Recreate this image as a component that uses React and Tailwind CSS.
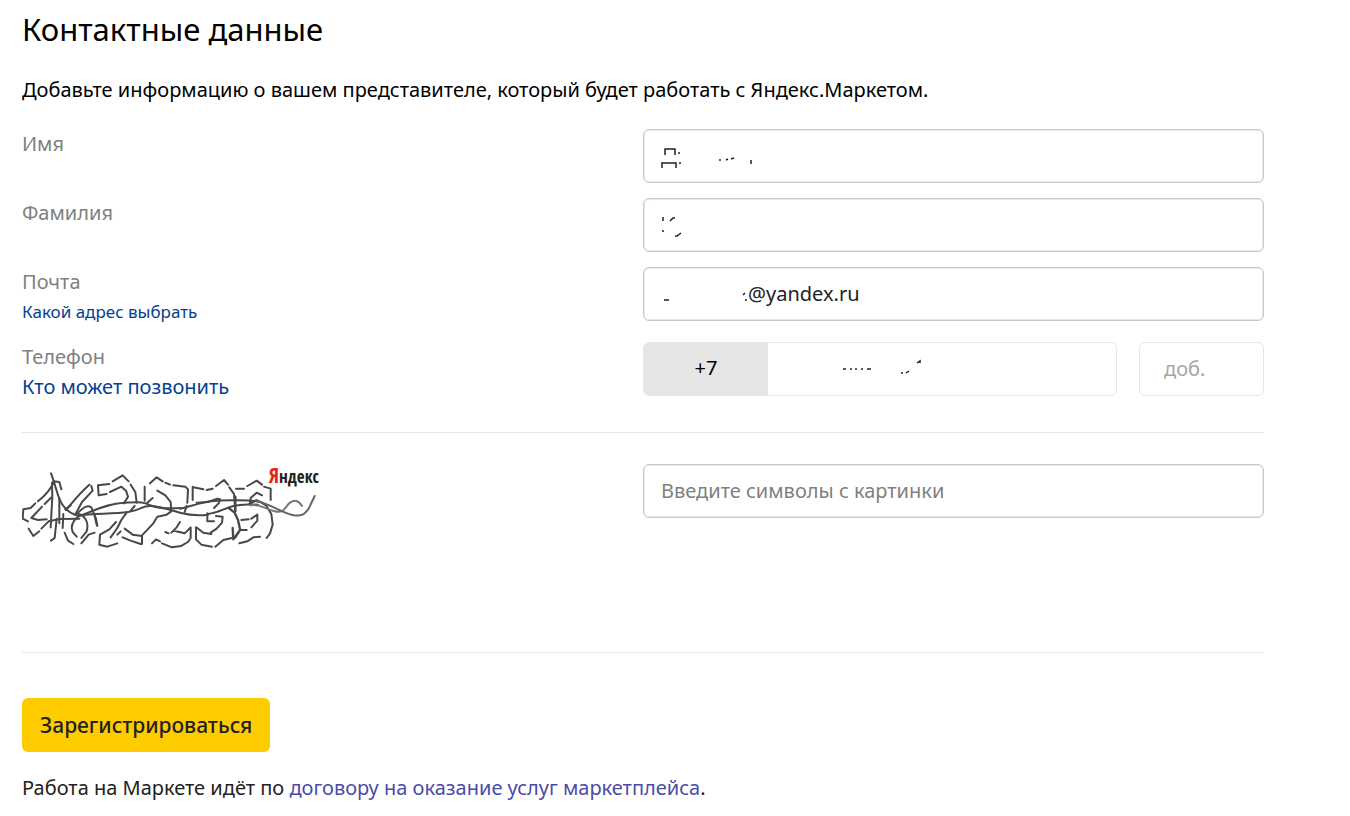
const field =
  "block h-[54px] w-full rounded-md border border-[#c8c8c8] bg-white px-[17px] pb-[2px] text-xl text-[#222] shadow-[inset_0_0_0_1px_#e8e8e8] outline-none placeholder:text-[#808080] focus:border-[#ffcc00]";

function Marks({ d }) {
  return (
    <svg
      className="pointer-events-none absolute left-0 top-0 h-[54px] w-[320px]"
      viewBox="0 0 320 54"
      fill="none"
      stroke="#222"
      strokeWidth="1.5"
      aria-hidden="true"
    >
      <path d={d} />
    </svg>
  );
}

function Captcha() {
  return (
    <svg className="block h-[94px] w-[300px]" viewBox="36 24 900 282" role="img" aria-label="Символы для проверки">
      <g fill="none" stroke="#484848" strokeWidth="6" strokeLinecap="round" strokeLinejoin="round">
        <path d="M123 70C134 98 138 120 148 146C158 172 176 190 206 198" />
        <path d="M132 94C124 116 108 134 84 154M76 160L62 174L40 178L38 206L54 214" />
        <path d="M130 94L148 96L154 118M126 98L127 140L122 232M124 142L104 162M96 170L64 204L84 210L110 208" />
        <path d="M148 144L148 220M140 206L134 264L123 272M160 192L158 234" />
        <path d="M56 236L70 258L88 244M94 236L116 214L150 207L208 206" />
        <path d="M168 180C190 154 210 128 238 104M244 108L248 122L216 156L198 190" />
        <path d="M166 178L182 166M202 190C218 176 230 162 244 172L258 206L262 228" />
        <path d="M206 198C190 212 180 230 188 246L200 260M206 192C224 196 238 218 230 244L214 264" />
        <path d="M164 248L174 272L190 282M214 280L236 254L254 248M254 198L260 224" />
        <path d="M264 106L298 102M264 106L266 136L290 132M300 126L334 110L348 122L354 140L342 160" />
        <path d="M308 94L338 76L356 94M362 104L376 126L380 158" />
        <path d="M208 198C250 184 290 160 344 158S400 156 422 166S470 176 512 174" />
        <path d="M206 196C250 190 310 192 354 186S390 168 420 168S480 180 510 188S560 198 594 194" />
        <path d="M374 168L362 182M350 188L334 210L322 234L302 262" />
        <path d="M318 216L298 238L270 254L268 284L292 290L322 280M332 244L322 254" />
        <path d="M344 236L368 254L396 258L396 282M338 262L362 272L392 282" />
        <path d="M404 110L404 152M412 158L428 144M420 100L440 82L458 94M466 98L480 104M490 106L526 110L534 118L532 158M530 168L524 186" />
        <path d="M442 122L466 136L482 156L484 184L470 194L442 200L430 220L396 256" />
        <path d="M426 280L438 268L450 274M456 280L486 292L514 288" />
        <path d="M466 246L476 250M484 248L500 232L510 216M492 242L524 250L542 232L542 264L534 276L516 286" />
        <path d="M548 110L548 150M550 112L580 118M590 120L608 116M618 108L642 90L654 104M658 112L672 132L676 184" />
        <path d="M560 158L594 156L622 146L630 148L626 160L612 174" />
        <path d="M510 176C540 170 570 158 602 154S700 150 724 152L752 156" />
        <path d="M592 190L592 214L612 214M618 198L638 200L636 218L620 236L602 248" />
        <path d="M558 232L558 268L574 284L606 290M562 234L580 248L604 252M616 290L640 270L666 264" />
        <path d="M594 192C626 188 640 176 670 168S720 164 744 164" />
        <path d="M656 174L674 188L684 210L690 238M668 234L670 268L690 240L676 262" strokeWidth="7" />
        <path d="M676 140L676 182" strokeWidth="7" />
        <path d="M678 116L702 116M712 108L740 92L756 104M762 110L782 116L782 150" />
        <path d="M720 160L722 144L740 128L756 136" />
        <path d="M718 162L740 150L768 166L784 192L788 224L780 250L770 264" />
        <path d="M694 210L716 208M724 206L742 194L742 212L724 232M710 240L690 240" />
        <path d="M688 280L712 274L730 262L750 260" />
        <path d="M720 166C748 160 764 176 794 184S826 168 840 158S866 152 876 168" stroke="#777" />
        <path d="M738 152C776 160 812 186 844 194S884 192 896 176L914 138" stroke="#666" />
      </g>
      <text x="776" y="98" fontFamily="'Liberation Sans Narrow', 'Open Sans Condensed', Roboto, sans-serif" fontSize="51" fill="#222">
        <tspan fill="#e52620" fontSize="62">Я</tspan>ндекс
      </text>
    </svg>
  );
}

export default function App() {
  return (
    <main className="pl-[22px] pr-[86px] pt-2 font-['Noto_Sans','Open_Sans',sans-serif] text-xl leading-[30px] text-[#222]">
      <h1 className="text-[31px] leading-[42px] text-black">Контактные данные</h1>
      <p className="mt-[25px] text-black">
        Добавьте информацию о вашем представителе, который будет работать с Яндекс.Маркетом.
      </p>
      <form onSubmit={(e) => e.preventDefault()}>
        <div className="mt-6 flex flex-col gap-[15px] text-[#808080]">
          <div className="grid grid-cols-2">
            <label htmlFor="first">Имя</label>
            <div className="relative">
              <input id="first" className={field} />
              <Marks d="M22 26V20H32V26M35 24h2M19 39V34H33V39M36 34h2M76 31h2M83 31l2-1M88 30l3-1M108 31v4" />
            </div>
          </div>
          <div className="grid grid-cols-2">
            <label htmlFor="last">Фамилия</label>
            <div className="relative">
              <input id="last" className={field} />
              <Marks d="M20 19v4M27 23l3-3h2M19 33h2M32 38h2l4-3" />
            </div>
          </div>
          <div className="grid grid-cols-2">
            <div className="flex flex-col items-start">
              <label htmlFor="mail">Почта</label>
              <a href="#mail" className="text-[17px] leading-[30px] text-[#04418f]">Какой адрес выбрать</a>
            </div>
            <div className="relative">
              <input id="mail" type="text" defaultValue="@yandex.ru" className={`${field} pl-[104px]`} />
              <Marks d="M21 33h5M102 26l-2 2M102 33h2" />
            </div>
          </div>
          <div className="grid grid-cols-2">
            <div className="flex flex-col items-start">
              <label htmlFor="phone">Телефон</label>
              <a href="#phone" className="text-[#04418f]">Кто может позвонить</a>
            </div>
            <div className="flex gap-[22px]">
              <div className="relative flex h-[54px] flex-1 overflow-hidden rounded-md border border-[#e6e6e6]">
                <span className="flex w-[124px] items-center justify-center bg-[#e6e6e6] pb-[2px] text-black">+7</span>
                <input id="phone" type="tel" className="min-w-0 flex-1 px-4 pb-[2px] text-xl text-black outline-none" />
                <Marks d="M199 26h3M206 26h2M211 26h2M217 26h2M223 26h4M257 30h2M262 30l3-2M273 20l3-2v2" />
              </div>
              <input
                aria-label="Добавочный номер"
                placeholder="доб."
                className="h-[54px] w-[125px] rounded-md border border-[#e6e6e6] px-6 pb-[2px] text-xl outline-none placeholder:text-[#a6a6a6]"
              />
            </div>
          </div>
        </div>
        <div className="mt-[30px] grid min-h-[221px] grid-cols-2 border-y border-[#e6e6e6] pt-[25px]">
          <Captcha />
          <div className="pt-[6px]">
            <input aria-label="Символы с картинки" placeholder="Введите символы с картинки" className={field} />
          </div>
        </div>
        <button type="submit" className="mt-[45px] block h-[54px] rounded-md bg-[#ffcc00] px-[18px] text-[21px] font-medium text-[#222]">
          Зарегистрироваться
        </button>
      </form>
      <p className="mt-[21px] pb-3">
        Работа на Маркете идёт по{" "}
        <a href="#terms" className="text-[#4b4ba8]">договору на оказание услуг маркетплейса</a>.
      </p>
    </main>
  );
}
